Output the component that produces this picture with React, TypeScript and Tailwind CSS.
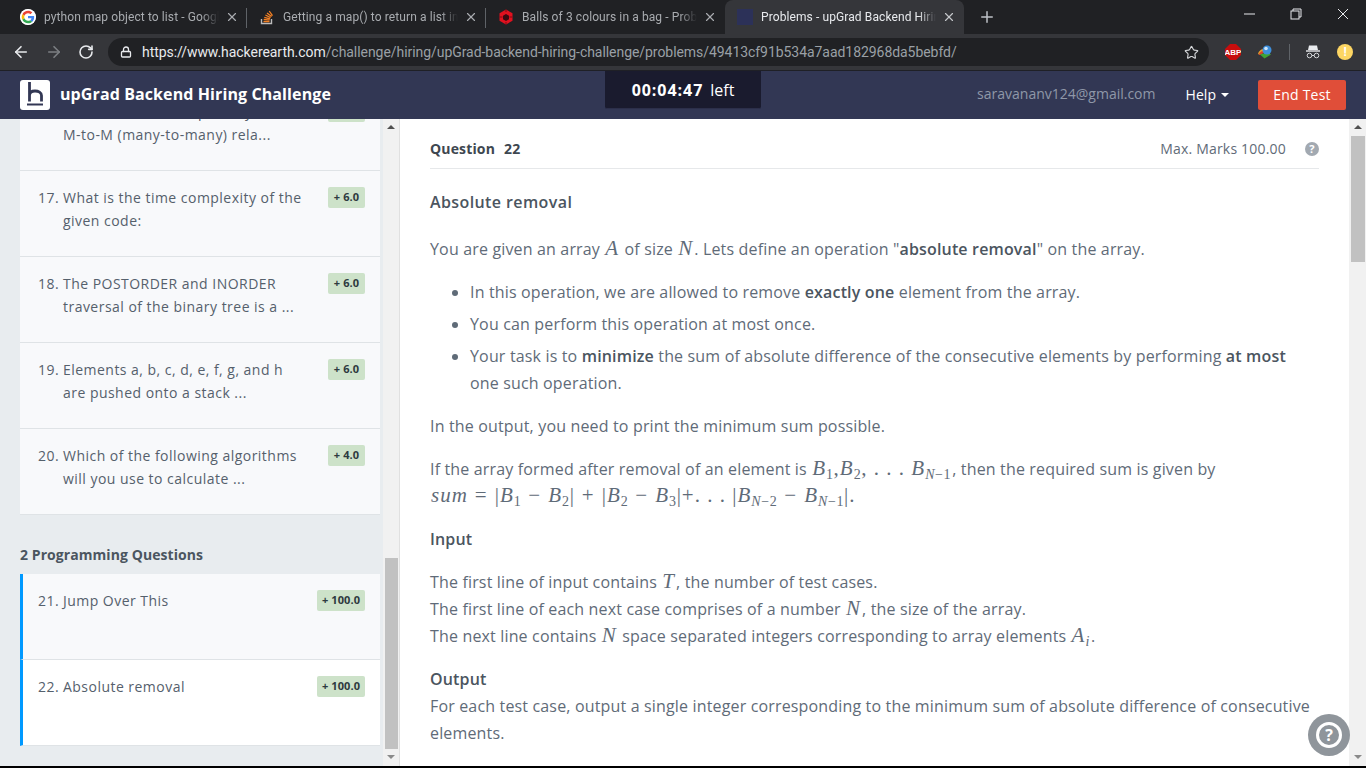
import React from "react";
import { ArrowLeft, ArrowRight, RotateCw, Lock, Star, X, Plus } from "lucide-react";

const sans = "font-['Open_Sans',sans-serif]";
const roboto = "font-['Roboto',sans-serif]";
const math = "font-['Liberation_Serif',serif] italic text-[21px] leading-none text-[#5f6b78] tracking-[1px]";

function GoogleIcon() {
  return (
    <svg width="16" height="16" viewBox="0 0 48 48" className="rounded-full bg-white shrink-0">
      <circle cx="24" cy="24" r="24" fill="#fff" />
      <path fill="#EA4335" d="M24 12.5c3 0 5.6 1 7.6 3l5.4-5.4C33.6 7 29.2 5 24 5 16.6 5 10.200 9.200 7.100 15.400l6.300 4.900C14.900 15.700 19 12.500 24 12.500z" />
      <path fill="#4285F4" d="M42.500 24.500c0-1.400-.1-2.500-.4-3.800H24v7.100h10.500c-.5 2.700-2 4.700-4.300 6.200l6.100 4.800c3.700-3.400 6.200-8.300 6.200-14.300z" />
      <path fill="#FBBC05" d="M13.400 27.700c-.4-1.200-.6-2.400-.6-3.700s.2-2.500.6-3.700l-6.300-4.900C5.800 18 5 20.900 5 24s.8 6 2.100 8.600l6.300-4.900z" />
      <path fill="#34A853" d="M24 43c5.200 0 9.500-1.700 12.300-4.700l-6.100-4.800c-1.600 1.100-3.600 1.800-6.200 1.800-5 0-9.100-3.200-10.600-7.600l-6.300 4.900C10.200 38.800 16.600 43 24 43z" />
    </svg>
  );
}

function SOIcon() {
  return (
    <svg width="16" height="16" viewBox="0 0 16 16" className="shrink-0" fill="none">
      <path d="M2.500 10v4.500h10V10" stroke="#bcbbbb" strokeWidth="1.400" />
      <path d="M4.500 12.700h6M4.700 10.500l5.900.6M5.300 8.300l5.700 1.500M6.400 6l5.200 2.700M8 3.900l4.600 3.600M10.200 2l3.300 4.700" stroke="#f48024" strokeWidth="1.300" />
    </svg>
  );
}

function RedIcon() {
  return (
    <svg width="16" height="16" viewBox="0 0 16 16" className="shrink-0">
      <path d="M8 .500l6.500 3.700v7.600L8 15.500l-6.500-3.700V4.200z" fill="#e0111f" />
      <path d="M8 5l3 1.700v3.600L8 12l-3-1.700V6.700z" fill="#3a0a10" />
      <path d="M1.500 8h3M11.500 8h3M8 .500v2.500M8 13v2.500" stroke="#7a0c14" strokeWidth="1" />
    </svg>
  );
}

function Tab({ icon, title, active, sep }: { icon: React.ReactNode; title: string; active?: boolean; sep?: boolean }) {
  return (
    <div className={`relative w-[239px] h-[34px] flex items-center pl-[12px] ${active ? "bg-[#35363a] rounded-t-lg" : ""}`}>
      {icon}
      <span className={`ml-[8px] w-[175px] overflow-hidden whitespace-nowrap text-[12px] tracking-[0.1px] [mask-image:linear-gradient(to_right,black_90%,transparent)] ${active ? "text-[#e8eaed]" : "text-[#a9acb0]"}`}>{title}</span>
      <X size={14} strokeWidth={2} className={`ml-[6px] shrink-0 ${active ? "text-[#c4c7ca]" : "text-[#a9acb0]"}`} />
      {sep && <div className="absolute right-0 top-[8px] h-[20px] w-px bg-[#5f6368]" />}
    </div>
  );
}

function ChromeBars() {
  return (
    <>
      <div className={`h-[34px] bg-[#202124] flex items-center pl-[8px] ${roboto}`}>
        <Tab icon={<GoogleIcon />} title="python map object to list - Google Search" sep />
        <Tab icon={<SOIcon />} title="Getting a map() to return a list in Python" sep />
        <Tab icon={<RedIcon />} title="Balls of 3 colours in a bag - Probability" />
        <Tab active icon={<div className="w-[16px] h-[16px] bg-[#2c3158] shrink-0" />} title="Problems - upGrad Backend Hiring Challenge" />
        <Plus size={18} strokeWidth={2} className="ml-[14px] text-[#bdc1c6]" />
        <div className="ml-auto flex items-center h-full text-[#e8eaed] pb-[6px]">
          <svg width="11" height="2" viewBox="0 0 11 2" className="mr-[35px]"><path d="M0 1h11" stroke="currentColor" strokeWidth="1" /></svg>
          <svg width="12" height="12" viewBox="0 0 12 12" fill="none" stroke="currentColor" strokeWidth="1" className="mr-[35px]">
            <rect x="1" y="3" width="8" height="8" />
            <path d="M3 3V1h8v8H9" />
          </svg>
          <svg width="12" height="12" viewBox="0 0 12 12" stroke="currentColor" strokeWidth="1" className="mr-[17px]"><path d="M1 1l10 10M11 1L1 11" /></svg>
        </div>
      </div>
      <div className={`h-[37px] bg-[#35363a] flex items-center border-b border-[#1f2026] ${roboto}`}>
        <ArrowLeft size={18} strokeWidth={2.200} className="ml-[12px] text-[#e8eaed]" />
        <ArrowRight size={18} strokeWidth={2.200} className="ml-[15px] text-[#7c7f83]" />
        <RotateCw size={16} strokeWidth={2.400} className="ml-[15px] text-[#e8eaed]" />
        <div className="ml-[14px] w-[1101px] h-[28px] rounded-full bg-[#202124] flex items-center pl-[12px] pr-[10px]">
          <Lock size={12} strokeWidth={2.600} className="text-[#e8eaed]" />
          <span className="ml-[10px] text-[14px] tracking-[-0.055px] whitespace-nowrap text-[#9aa0a6] flex-1"><span className="text-[#e8eaed]">https://www.hackerearth.com</span>/challenge/hiring/upGrad-backend-hiring-challenge/problems/49413cf91b534a7aad182968da5bebfd/</span>
          <Star size={15} strokeWidth={1.800} className="text-[#d5d7da]" />
        </div>
        <svg width="16" height="16" viewBox="0 0 16 16" className="ml-[16px]">
          <path d="M5 0h6l5 5v6l-5 5H5l-5-5V5z" fill="#c70d0d" />
          <text x="8" y="11" textAnchor="middle" fontSize="8" fontWeight="700" fill="#fff" fontFamily="Liberation Sans, sans-serif">ABP</text>
        </svg>
        <svg width="16" height="16" viewBox="0 0 16 16" className="ml-[16px]">
          <path d="M1 10c.5-3 3-5 6-5l1 3-3 1-2 2z" fill="#e8a02c" />
          <path d="M2 11c0-2 1.500-3.500 3.500-4l1 2-2.500 1.500z" fill="#d8402c" />
          <path d="M3 10.500l5-1.500 1-1.500 5 3-6.500 4z" fill="#3fa435" />
          <circle cx="10" cy="6" r="4.500" fill="#3d8fdc" />
          <circle cx="9" cy="4.500" r="1.800" fill="#cfe6f8" />
        </svg>
        <div className="ml-[16px] w-px h-[16px] bg-[#5f6368]" />
        <svg width="16" height="16" viewBox="0 0 16 16" className="ml-[15px]" fill="none" stroke="#d5d7da">
          <path d="M4 1.500h8l1 4.500H3z" fill="#e8eaed" stroke="none" />
          <path d="M1 7h14" strokeWidth="1.400" stroke="#e8eaed" />
          <circle cx="4.500" cy="11.500" r="2.300" />
          <circle cx="11.500" cy="11.500" r="2.300" />
          <path d="M7 11.500h2" />
        </svg>
        <div className="ml-[16px] w-[16px] h-[16px] rounded-full bg-[#fdd663] text-white text-[12px] font-bold flex items-center justify-center">!</div>
      </div>
    </>
  );
}

function AppHeader() {
  return (
    <div className={`h-[48px] bg-[#323754] flex ${sans}`}>
      <div className="w-[605px] flex items-center pl-[20px]">
        <div className="w-[30px] h-[30px] rounded-[3px] bg-white flex items-center justify-center">
          <svg width="30" height="30" viewBox="0 0 30 30" fill="none">
            <path d="M9.500 21.500V2M9.500 15.500c0-3 2-4.500 5.500-4.500s6.500 1.500 6.500 4.500v6" stroke="#323754" strokeWidth="2.800" />
            <path d="M7 24.500h16" stroke="#323754" strokeWidth="2" />
          </svg>
        </div>
        <span className="ml-[10px] pb-[2px] text-white text-[16px] font-bold tracking-[0.1px]">upGrad Backend Hiring Challenge</span>
      </div>
      <div className="w-[156px] h-[38px] bg-[#1a1b2e] rounded-b-[2px] border-b border-[#2c2f4a] flex items-center justify-center gap-[7px]">
        <span className="text-white text-[16px] font-bold tracking-[0.95px]">00:04:47</span>
        <span className="text-white text-[16px]">left</span>
      </div>
      <div className="flex-1 flex items-center justify-end pr-[20px]">
        <span className="text-[#8f97a8] text-[14px] pb-[3px]">saravananv124@gmail.com</span>
        <span className="ml-[30px] text-white text-[14px] pb-[2px] tracking-[0.05px]">Help</span>
        <div className="ml-[5px] w-0 h-0 border-x-[4px] border-x-transparent border-t-[4px] border-t-white" />
        <div className="ml-[29px] w-[88px] h-[30px] pb-[1px] rounded-[2px] bg-[#e04e39] text-white text-[14px] tracking-[0.2px] flex items-center justify-center">End Test</div>
      </div>
    </div>
  );
}

function Item({ n, lines, marks, active, selected, wide }: { n: string; lines: string[]; marks: string; active?: boolean; selected?: boolean; wide?: boolean }) {
  return (
    <div className={`h-[86px] ${selected ? "bg-white" : "bg-[#f8f9fb]"} ${active ? "border-l-[3px] border-l-[#0099ff] pl-[15px]" : "pl-[18px]"} border-b border-b-[#dfe3e6] pr-[15px] pt-[15px] flex justify-between`}>
      <div className="flex text-[14px] leading-[23px] text-[#55606c] tracking-[0.47px]">
        <span className="whitespace-pre w-[25px]">{n}</span>
        <div>{lines.map((l) => <div key={l} className="whitespace-nowrap">{l}</div>)}</div>
      </div>
      <div className={`${wide ? "w-[48px]" : "w-[37px]"} h-[21px] mt-[1px] rounded-[2px] bg-[#cde2c9] text-[#2e3a40] text-[11px] font-bold tracking-[0.1px] flex items-center justify-center`}>{marks}</div>
    </div>
  );
}

function Sidebar() {
  return (
    <div className={`w-[383px] bg-[#e8ecef] overflow-hidden pl-[20px] pr-[3px] ${sans}`}>
      <div className="mt-[-34px]">
        <Item n="16." lines={["Which of these is a primary", "M-to-M (many-to-many) rela..."]} marks="+ 6.0" />
        <Item n="17." lines={["What is the time complexity of the", "given code:"]} marks="+ 6.0" />
        <Item n="18." lines={["The POSTORDER and INORDER", "traversal of the binary tree is a ..."]} marks="+ 6.0" />
        <Item n="19." lines={["Elements a, b, c, d, e, f, g, and h", "are pushed onto a stack ..."]} marks="+ 6.0" />
        <Item n="20." lines={["Which of the following algorithms", "will you use to calculate ..."]} marks="+ 4.0" />
      </div>
      <div className="mt-[28px] mb-[8px] text-[14px] leading-[23px] font-bold text-[#4b5560] tracking-[0.07px]">2 Programming Questions</div>
      <Item active n="21." lines={["Jump Over This"]} marks="+ 100.0" wide />
      <Item active selected n="22." lines={["Absolute removal"]} marks="+ 100.0" wide />
    </div>
  );
}

function Scrollbar({ w, top, thumbH, thumbClass }: { w: string; top: string; thumbH: string; thumbClass: string }) {
  return (
    <div className={`${w} bg-[#f1f1f1] flex flex-col items-center`}>
      <div className="mt-[6px] w-0 h-0 border-x-[4px] border-x-transparent border-b-[4px] border-b-[#505050] shrink-0" />
      <div className={`${top} ${thumbH} ${thumbClass} bg-[#c1c1c1] shrink-0`} />
      <div className="mt-auto mb-[7px] w-0 h-0 border-x-[4px] border-x-transparent border-t-[4px] border-t-[#8a8a8a] shrink-0" />
    </div>
  );
}

function S({ children }: { children: React.ReactNode }) {
  return <sub className="text-[14px] align-baseline relative top-[4px] leading-none tracking-[0.6px]">{children}</sub>;
}
function N({ children }: { children: React.ReactNode }) {
  return <span className="not-italic">{children}</span>;
}
function Op({ children }: { children: React.ReactNode }) {
  return <span className="not-italic mx-[7px]">{children}</span>;
}
function M({ children }: { children: React.ReactNode }) {
  return <span className={`${math} mx-[1px]`}>{children}</span>;
}
const bold = "font-semibold text-[#4b5560]";

function Content() {
  return (
    <div className={`flex-1 bg-white overflow-hidden pl-[30px] pr-[30px] text-[16px] leading-[27px] text-[#5f6b78] tracking-[0.16px] ${sans}`}>
      <div className="h-[50px] border-b border-b-[#e6e8ea] flex items-center justify-between pt-[10px]">
        <span className="flex gap-[9px] text-[14px] font-bold text-[#3e4750] tracking-[0.15px]"><span>Question</span><span>22</span></span>
        <div className="flex items-center">
          <span className="text-[14px] text-[#5f6b78] tracking-[0.2px]">Max. Marks 100.00</span>
          <div className="ml-[19px] w-[14px] h-[14px] rounded-full bg-[#a2a9b1] text-white text-[11px] font-bold flex items-center justify-center">?</div>
        </div>
      </div>
      <h2 className="mt-[20px] text-[16px] leading-[27px] font-semibold text-[#4b5560] tracking-[0.4px]">Absolute removal</h2>
      <p className="mt-[20px]">You are given an array <M>A</M> of size <M>N</M>. Lets define an operation "<b className={bold}>absolute removal</b>" on the array.</p>
      <ul className="mt-[16px] list-disc pl-[40px]">
        <li className="mb-[5px]">In this operation, we are allowed to remove <b className={bold}>exactly one</b> element from the array.</li>
        <li className="mb-[5px]">You can perform this operation at most once.</li>
        <li>Your task is to <b className={bold}>minimize</b> the sum of absolute difference of the consecutive elements by performing <b className={bold}>at most</b> one such operation.</li>
      </ul>
      <p className="mt-[16px]">In the output, you need to print the minimum sum possible.</p>
      <p className="mt-[16px]">If the array formed after removal of an element is <M>B<S><N>1</N></S><N>,</N>B<S><N>2</N></S><N>, . . . </N>B<S>N<N>−1</N></S></M>, then the required sum is given by<br />
        <M>sum<Op>=</Op><N>|</N>B<S><N>1</N></S><Op>−</Op>B<S><N>2</N></S><N>|</N><Op>+</Op><N>|</N>B<S><N>2</N></S><Op>−</Op>B<S><N>3</N></S><N>|+. . . |</N>B<S>N<N>−2</N></S><Op>−</Op>B<S>N<N>−1</N></S><N>|.</N></M>
      </p>
      <h3 className={`mt-[16px] ${bold}`}>Input</h3>
      <p className="mt-[16px]">The first line of input contains <M>T</M>, the number of test cases.<br />
        The first line of each next case comprises of a number <M>N</M>, the size of the array.<br />
        The next line contains <M>N</M> space separated integers corresponding to array elements <M>A<S>i</S></M>.</p>
      <h3 className={`mt-[16px] ${bold}`}>Output</h3>
      <p>For each test case, output a single integer corresponding to the minimum sum of absolute difference of consecutive elements.</p>
    </div>
  );
}

export default function App() {
  return (
    <div className="w-[1366px] h-[768px] overflow-hidden flex flex-col bg-black">
      <ChromeBars />
      <AppHeader />
      <div className="relative h-[647px] flex">
        <Sidebar />
        <Scrollbar w="w-[16px]" top="mt-[429px]" thumbH="h-[191px]" thumbClass="w-[13px]" />
        <div className="w-px bg-[#e0e0e0]" />
        <Content />
        <Scrollbar w="w-[17px]" top="mt-[7px]" thumbH="h-[126px]" thumbClass="w-[14px]" />
        <div className="absolute left-[1308px] top-[595px] w-[42px] h-[42px] rounded-full bg-[#8f959b] flex items-center justify-center">
          <div className={`w-[26px] h-[26px] rounded-full border-[3px] border-white text-white text-[16px] font-bold flex items-center justify-center ${sans}`}>?</div>
        </div>
      </div>
      <div className="h-[2px] bg-black" />
    </div>
  );
}
